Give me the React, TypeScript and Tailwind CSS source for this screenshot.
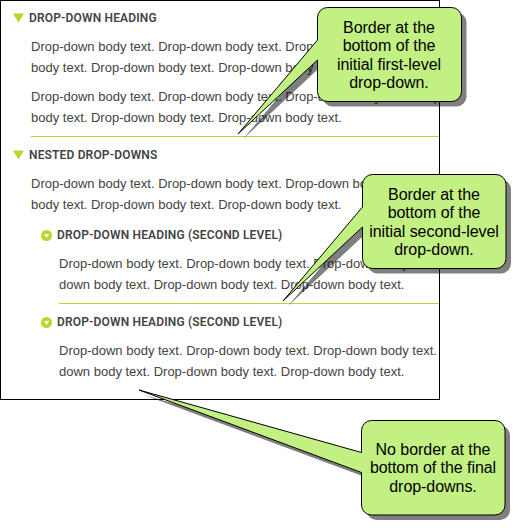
import React from "react";

const SENTENCE = "Drop-down body text.";

function Body({ lines, className = "" }: { lines: string[]; className?: string }) {
  return (
    <div className={`text-[13px] leading-[21px] text-[#444444] ${className}`}>
      {lines.map((line, i) => (
        <p key={i}>{line}</p>
      ))}
    </div>
  );
}

const WIDE = [
  `${SENTENCE} ${SENTENCE} ${SENTENCE} Drop-down`,
  `body text. ${SENTENCE} ${SENTENCE}`,
];
const NESTED = [
  `${SENTENCE} ${SENTENCE} ${SENTENCE}`,
  `down body text. ${SENTENCE} ${SENTENCE}`,
];

function Heading({ text, className = "" }: { text: string; className?: string }) {
  return (
    <h2 className={`flex h-4 items-center font-[Roboto,sans-serif] text-[12px] leading-4 font-semibold tracking-[0.16px] text-[#444444] ${className}`}>
      <svg className="mr-[5px] shrink-0" width="11" height="10" viewBox="0 0 11 10">
        <path d="M0 .5h11L5.5 9.5z" fill="#bed230" />
      </svg>
      {text}
    </h2>
  );
}

function SubHeading({ text, className = "" }: { text: string; className?: string }) {
  return (
    <h3 className={`flex h-4 items-center font-[Roboto,sans-serif] text-[12px] leading-4 font-semibold tracking-[0.16px] text-[#444444] ${className}`}>
      <svg className="mr-[5px] shrink-0" width="11" height="11" viewBox="0 0 11 11">
        <circle cx="5.5" cy="5.5" r="5.5" fill="#bed230" />
        <path d="M3 4h5L5.5 8z" fill="#fff" />
      </svg>
      {text}
    </h3>
  );
}

const OUTLINES = [
  "M327.5 7.5H451.5a10 10 0 0 1 10 10V91.5a10 10 0 0 1-10 10H327.5a10 10 0 0 1-10-10V60L238 134L317.5 40V17.5a10 10 0 0 1 10-10z",
  "M372.5 174.5H496a10 10 0 0 1 10 10V258.5a10 10 0 0 1-10 10H372.5a10 10 0 0 1-10-10V227L283 301L362.5 207V184.5a10 10 0 0 1 10-10z",
  "M371.5 420.5H495a10 10 0 0 1 10 10V505a10 10 0 0 1-10 10H371.5a10 10 0 0 1-10-10V472.5L139 390L361.5 452.5V430.5a10 10 0 0 1 10-10z",
];

function Note({ lines, className }: { lines: string[]; className: string }) {
  return (
    <div className={`absolute w-[144px] text-center text-[16px] leading-[18.4px] tracking-[-0.05px] whitespace-nowrap text-black ${className}`}>
      {lines.map((l) => (
        <p key={l}>{l}</p>
      ))}
    </div>
  );
}

export default function App() {
  return (
    <div className="relative h-[530px] w-[521px] overflow-hidden bg-white font-['Liberation_Sans',Arial,sans-serif]">
      <main className="h-[400px] w-[440px] overflow-hidden border border-black pt-[9px] pl-3 whitespace-nowrap">
        <Heading text="DROP-DOWN HEADING" />
        <div className="ml-[18px] border-b border-[#bed230] pb-2">
          <Body lines={WIDE} className="pt-2.5" />
          <Body lines={WIDE} className="pt-2" />
        </div>
        <Heading text="NESTED DROP-DOWNS" className="mt-2.5" />
        <Body lines={WIDE} className="ml-[18px] pt-2.5" />
        <div className="ml-7">
          <SubHeading text="DROP-DOWN HEADING (SECOND LEVEL)" className="mt-3" />
          <div className="ml-[18px] border-b border-[#bed230] pb-2">
            <Body lines={NESTED} className="pt-2.5" />
          </div>
          <SubHeading text="DROP-DOWN HEADING (SECOND LEVEL)" className="mt-2.5" />
          <Body lines={NESTED} className="ml-[18px] pt-2.5" />
        </div>
      </main>
      <svg className="absolute inset-0" width="521" height="530" viewBox="0 0 521 530">
        {OUTLINES.map((d) => (
          <g key={d}>
            <path d={d} transform="translate(5 5)" fill="#000" fillOpacity="0.5" />
            <path d={d} fill="#c2f083" stroke="#000" strokeWidth="1" strokeLinejoin="bevel" />
          </g>
        ))}
      </svg>
      <Note className="top-[19px] left-[317px]" lines={["Border at the", "bottom of the", "initial first-level", "drop-down."]} />
      <Note className="top-[186px] left-[362px]" lines={["Border at the", "bottom of the", "initial second-level", "drop-down."]} />
      <Note className="top-[441px] left-[361px]" lines={["No border at the", "bottom of the final", "drop-downs."]} />
    </div>
  );
}
